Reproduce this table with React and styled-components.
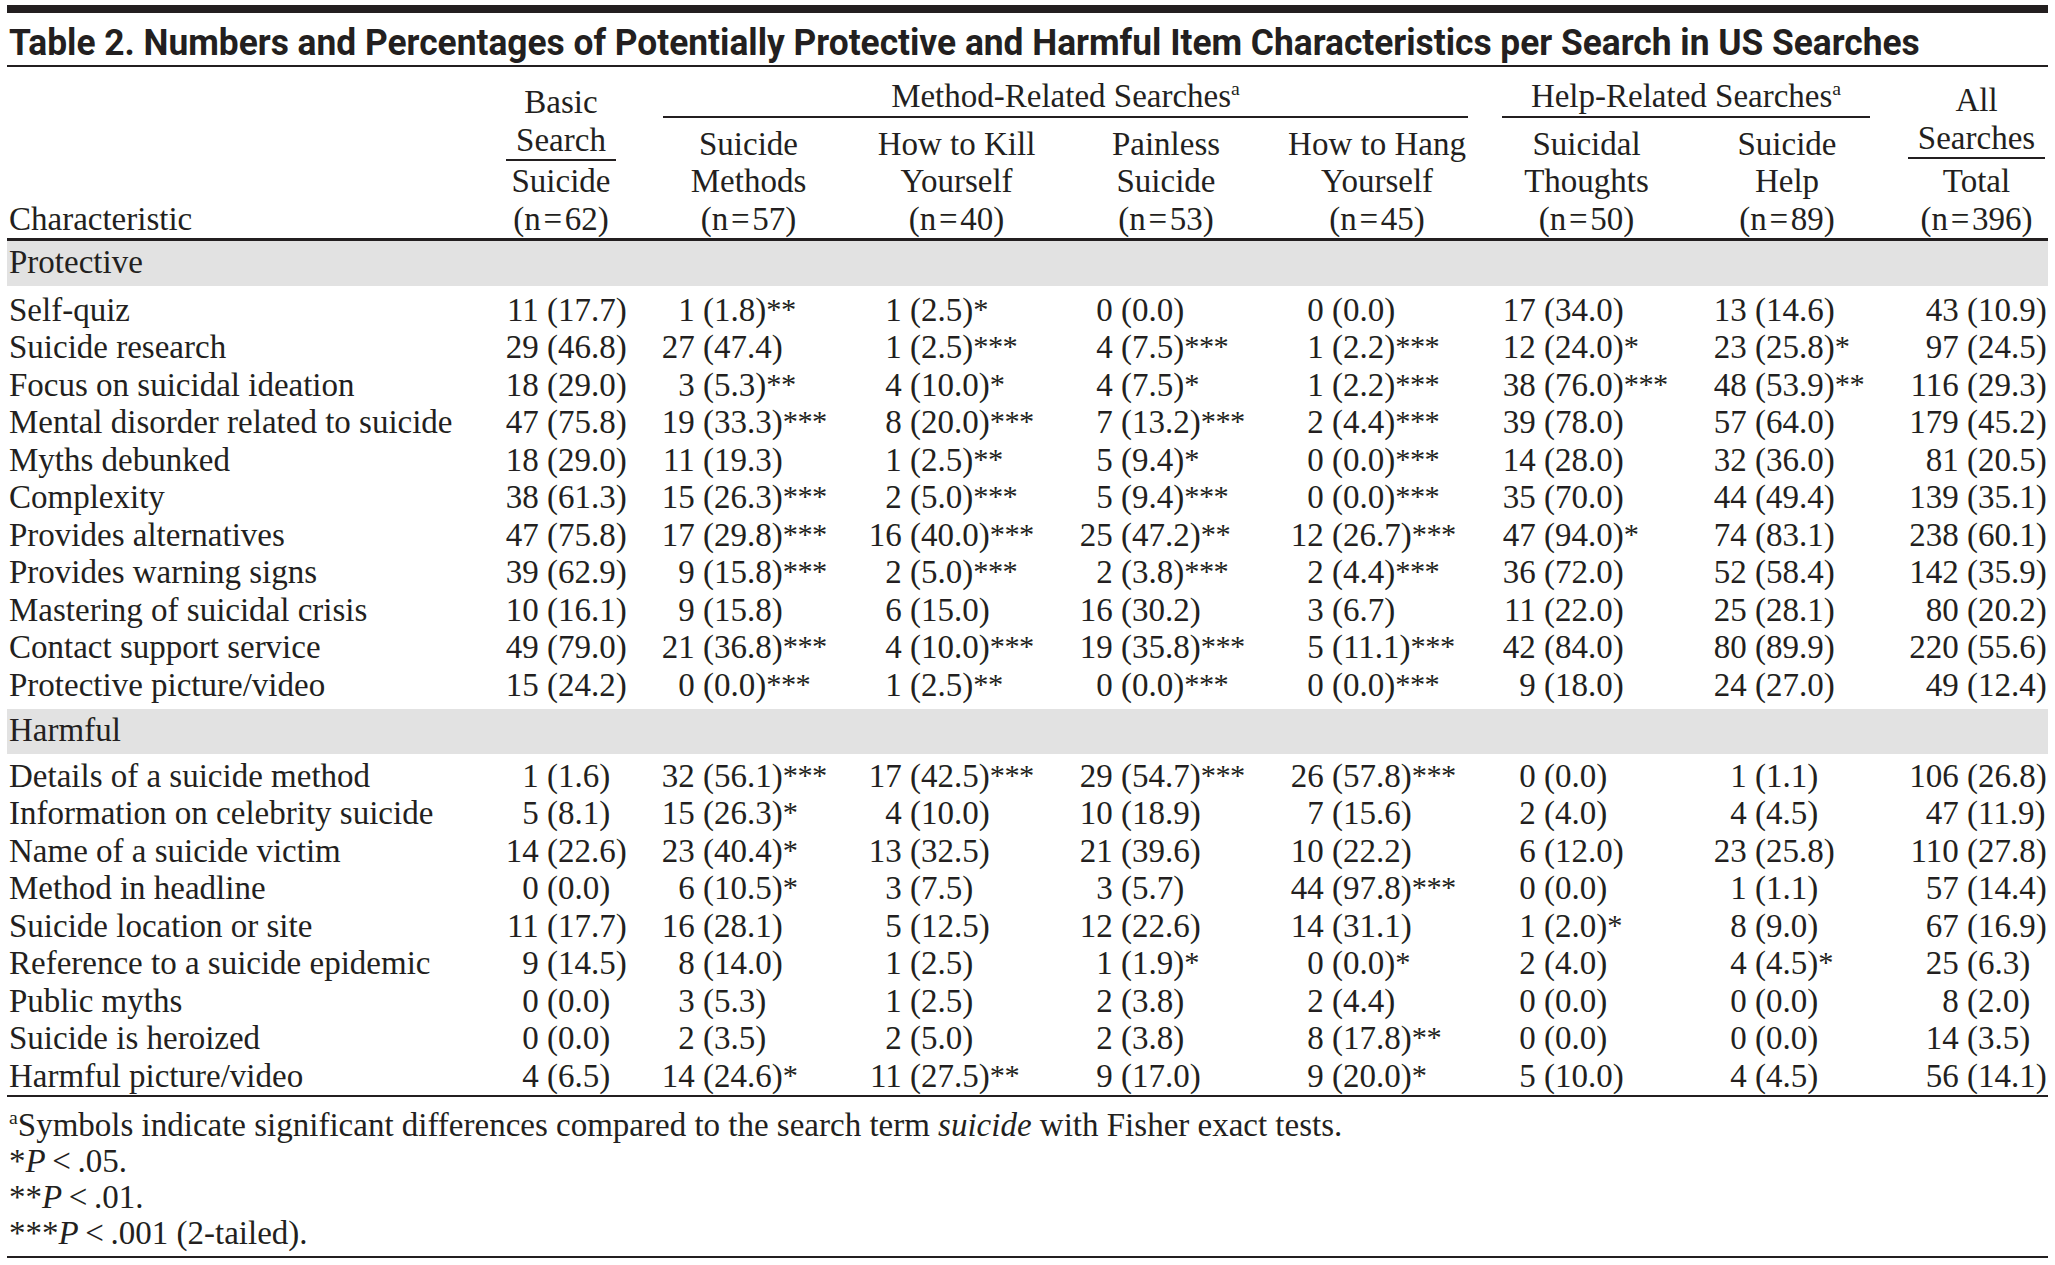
import React, { useLayoutEffect, useRef, useState } from "react";
import styled, { createGlobalStyle } from "styled-components";

const INK = "#231f20";
const COLS = "468px 182px 195px 209px 210px 212px 207px 194px 164px";
// x offset (from each data column's left edge) where the "(" of the percentage sits
const ANCHORS = [72, 46, 58, 60, 61, 61, 65, 83];
const EQ = "\u200A=\u200A";

const GlobalStyle = createGlobalStyle`
  html, body {
    margin: 0;
    padding: 0;
    background: #ffffff;
  }
  body {
    font-family: "Liberation Serif", "Times New Roman", serif;
    color: ${INK};
  }
`;

const Page = styled.div`
  width: 2041px;
  padding: 5px 7px 0;
`;

const TopBar = styled.div`
  height: 8px;
  background: ${INK};
`;

const TitleRow = styled.div`
  height: 54px;
  padding: 9px 0 0 2px;
  box-sizing: border-box;
  border-bottom: 2px solid ${INK};
  white-space: nowrap;
  overflow: hidden;
`;

const TitleText = styled.span`
  display: inline-block;
  transform-origin: left center;
  font-family: Roboto, "Open Sans", "Liberation Sans", sans-serif;
  font-weight: 700;
  font-size: 36px;
  line-height: 42px;
  color: ${INK};
`;

const Head = styled.div`
  display: grid;
  grid-template-columns: ${COLS};
  grid-template-rows: auto auto;
  border-bottom: 3px solid ${INK};
  font-size: 33px;
  line-height: 37.5px;
`;

const CharHead = styled.div`
  grid-column: 1;
  grid-row: 1 / span 2;
  align-self: end;
  padding-left: 2px;
`;

const StackHead = styled.div`
  grid-column: ${(p) => p.$col};
  grid-row: 1 / span 2;
  display: flex;
  flex-direction: column;
  align-items: center;
  justify-content: flex-end;
  text-align: center;
  padding-left: ${(p) => p.$pl || 0}px;
  padding-right: ${(p) => p.$pr || 0}px;
`;

const StackTop = styled.div`
  padding: 0 10px;
  border-bottom: 2px solid ${INK};
  line-height: 38px;
  margin-bottom: ${(p) => p.$gap}px;
`;

const GroupHead = styled.div`
  grid-row: 1;
  grid-column: ${(p) => p.$col};
  margin: 0 ${(p) => p.$mr}px 8px ${(p) => p.$ml}px;
  padding-top: 11px;
  border-bottom: 2px solid ${INK};
  text-align: center;
`;

const SubHead = styled.div`
  grid-row: 2;
  grid-column: ${(p) => p.$col};
  text-align: center;
  white-space: nowrap;
  padding-right: ${(p) => p.$pr || 0}px;
`;

const Sup = styled.sup`
  font-size: 0.6em;
  line-height: 0;
  vertical-align: 0.6em;
`;

const Body = styled.div`
  font-size: 33px;
  border-bottom: 2px solid ${INK};
`;

const Band = styled.div`
  height: 45px;
  line-height: 43px;
  padding-left: 2px;
  background: #e2e2e2;
`;

const Group = styled.div`
  padding: ${(p) => p.$pt}px 0 ${(p) => p.$pb}px;
`;

const Row = styled.div`
  display: grid;
  grid-template-columns: ${COLS};
  height: 37.5px;
  line-height: 37.5px;
  white-space: nowrap;
`;

const Label = styled.div`
  padding-left: 2px;
`;

const DataCell = styled.div`
  display: flex;
  white-space: nowrap;
`;

const Num = styled.span`
  display: inline-block;
  width: ${(p) => p.$w}px;
  box-sizing: border-box;
  padding-right: 0.25em;
  text-align: right;
`;

const Stars = styled.span`
  font-size: 0.92em;
  letter-spacing: -0.5px;
  position: relative;
  top: -1px;
`;

const Notes = styled.div`
  font-size: 33px;
  line-height: 36px;
  padding: 9.5px 0 5px 2px;
  border-bottom: 2px solid ${INK};
`;

const Note = styled.div`
  white-space: nowrap;
`;

const I = styled.i`
  font-style: italic;
`;

const SUBHEADS = [
  { col: 3, lines: ["Suicide", "Methods", `(n${EQ}57)`], pr: 12 },
  { col: 4, lines: ["How to Kill", "Yourself", `(n${EQ}40)`] },
  { col: 5, lines: ["Painless", "Suicide", `(n${EQ}53)`] },
  { col: 6, lines: ["How to Hang", "Yourself", `(n${EQ}45)`] },
  { col: 7, lines: ["Suicidal", "Thoughts", `(n${EQ}50)`] },
  { col: 8, lines: ["Suicide", "Help", `(n${EQ}89)`] },
];

const PROTECTIVE = [
  ["Self-quiz", "11 (17.7)", "1 (1.8)**", "1 (2.5)*", "0 (0.0)", "0 (0.0)", "17 (34.0)", "13 (14.6)", "43 (10.9)"],
  ["Suicide research", "29 (46.8)", "27 (47.4)", "1 (2.5)***", "4 (7.5)***", "1 (2.2)***", "12 (24.0)*", "23 (25.8)*", "97 (24.5)"],
  ["Focus on suicidal ideation", "18 (29.0)", "3 (5.3)**", "4 (10.0)*", "4 (7.5)*", "1 (2.2)***", "38 (76.0)***", "48 (53.9)**", "116 (29.3)"],
  ["Mental disorder related to suicide", "47 (75.8)", "19 (33.3)***", "8 (20.0)***", "7 (13.2)***", "2 (4.4)***", "39 (78.0)", "57 (64.0)", "179 (45.2)"],
  ["Myths debunked", "18 (29.0)", "11 (19.3)", "1 (2.5)**", "5 (9.4)*", "0 (0.0)***", "14 (28.0)", "32 (36.0)", "81 (20.5)"],
  ["Complexity", "38 (61.3)", "15 (26.3)***", "2 (5.0)***", "5 (9.4)***", "0 (0.0)***", "35 (70.0)", "44 (49.4)", "139 (35.1)"],
  ["Provides alternatives", "47 (75.8)", "17 (29.8)***", "16 (40.0)***", "25 (47.2)**", "12 (26.7)***", "47 (94.0)*", "74 (83.1)", "238 (60.1)"],
  ["Provides warning signs", "39 (62.9)", "9 (15.8)***", "2 (5.0)***", "2 (3.8)***", "2 (4.4)***", "36 (72.0)", "52 (58.4)", "142 (35.9)"],
  ["Mastering of suicidal crisis", "10 (16.1)", "9 (15.8)", "6 (15.0)", "16 (30.2)", "3 (6.7)", "11 (22.0)", "25 (28.1)", "80 (20.2)"],
  ["Contact support service", "49 (79.0)", "21 (36.8)***", "4 (10.0)***", "19 (35.8)***", "5 (11.1)***", "42 (84.0)", "80 (89.9)", "220 (55.6)"],
  ["Protective picture/video", "15 (24.2)", "0 (0.0)***", "1 (2.5)**", "0 (0.0)***", "0 (0.0)***", "9 (18.0)", "24 (27.0)", "49 (12.4)"],
];

const HARMFUL = [
  ["Details of a suicide method", "1 (1.6)", "32 (56.1)***", "17 (42.5)***", "29 (54.7)***", "26 (57.8)***", "0 (0.0)", "1 (1.1)", "106 (26.8)"],
  ["Information on celebrity suicide", "5 (8.1)", "15 (26.3)*", "4 (10.0)", "10 (18.9)", "7 (15.6)", "2 (4.0)", "4 (4.5)", "47 (11.9)"],
  ["Name of a suicide victim", "14 (22.6)", "23 (40.4)*", "13 (32.5)", "21 (39.6)", "10 (22.2)", "6 (12.0)", "23 (25.8)", "110 (27.8)"],
  ["Method in headline", "0 (0.0)", "6 (10.5)*", "3 (7.5)", "3 (5.7)", "44 (97.8)***", "0 (0.0)", "1 (1.1)", "57 (14.4)"],
  ["Suicide location or site", "11 (17.7)", "16 (28.1)", "5 (12.5)", "12 (22.6)", "14 (31.1)", "1 (2.0)*", "8 (9.0)", "67 (16.9)"],
  ["Reference to a suicide epidemic", "9 (14.5)", "8 (14.0)", "1 (2.5)", "1 (1.9)*", "0 (0.0)*", "2 (4.0)", "4 (4.5)*", "25 (6.3)"],
  ["Public myths", "0 (0.0)", "3 (5.3)", "1 (2.5)", "2 (3.8)", "2 (4.4)", "0 (0.0)", "0 (0.0)", "8 (2.0)"],
  ["Suicide is heroized", "0 (0.0)", "2 (3.5)", "2 (5.0)", "2 (3.8)", "8 (17.8)**", "0 (0.0)", "0 (0.0)", "14 (3.5)"],
  ["Harmful picture/video", "4 (6.5)", "14 (24.6)*", "11 (27.5)**", "9 (17.0)", "9 (20.0)*", "5 (10.0)", "4 (4.5)", "56 (14.1)"],
];

function Cell({ value, anchor }) {
  const m = value.match(/^(\d+) (\([^)]*\))(\**)$/);
  return (
    <DataCell>
      <Num $w={anchor}>{m[1]}</Num>
      <span>{m[2]}</span>
      {m[3] && <Stars>{m[3]}</Stars>}
    </DataCell>
  );
}

function DataRow({ row }) {
  const [label, ...vals] = row;
  return (
    <Row>
      <Label>{label}</Label>
      {vals.map((v, i) => (
        <Cell key={i} value={v} anchor={ANCHORS[i]} />
      ))}
    </Row>
  );
}

function useFitWidth(target) {
  const ref = useRef(null);
  const [scale, setScale] = useState(1);
  useLayoutEffect(() => {
    const fit = () => {
      if (ref.current) setScale(target / ref.current.offsetWidth);
    };
    fit();
    if (document.fonts && document.fonts.ready) document.fonts.ready.then(fit);
  }, [target]);
  return [ref, scale];
}

export default function App() {
  const [titleRef, titleScale] = useFitWidth(1911);

  return (
    <Page>
      <GlobalStyle />
      <TopBar />
      <TitleRow>
        <TitleText ref={titleRef} style={{ transform: `scaleX(${titleScale})` }}>
          Table 2. Numbers and Percentages of Potentially Protective and Harmful Item Characteristics per
          Search in US Searches
        </TitleText>
      </TitleRow>

      <Head>
        <CharHead>Characteristic</CharHead>
        <StackHead $col={2} $pr={10}>
          <StackTop $gap={2}>
            Basic
            <br />
            Search
          </StackTop>
          <div>
            Suicide
            <br />
            (n{EQ}62)
          </div>
        </StackHead>
        <GroupHead $col="3 / span 4" $ml={6} $mr={15}>
          Method-Related Searches<Sup>a</Sup>
        </GroupHead>
        <GroupHead $col="7 / span 2" $ml={19} $mr={14}>
          Help-Related Searches<Sup>a</Sup>
        </GroupHead>
        <StackHead $col={9} $pl={21}>
          <StackTop $gap={4}>
            All
            <br />
            Searches
          </StackTop>
          <div>
            Total
            <br />
            (n{EQ}396)
          </div>
        </StackHead>
        {SUBHEADS.map((s) => (
          <SubHead key={s.col} $col={s.col} $pr={s.pr}>
            {s.lines[0]}
            <br />
            {s.lines[1]}
            <br />
            {s.lines[2]}
          </SubHead>
        ))}
      </Head>

      <Body>
        <Band>Protective</Band>
        <Group $pt={5.5} $pb={4.5}>
          {PROTECTIVE.map((r) => (
            <DataRow key={r[0]} row={r} />
          ))}
        </Group>
        <Band>Harmful</Band>
        <Group $pt={4} $pb={0}>
          {HARMFUL.map((r) => (
            <DataRow key={r[0]} row={r} />
          ))}
        </Group>
      </Body>

      <Notes>
        <Note>
          <Sup>a</Sup>Symbols indicate significant differences compared to the search term <I>suicide</I> with
          Fisher exact tests.
        </Note>
        <Note>
          *<I>P</I>
          {"\u2009<\u2009.05."}
        </Note>
        <Note>
          **<I>P</I>
          {"\u2009<\u2009.01."}
        </Note>
        <Note>
          ***<I>P</I>
          {"\u2009<\u2009.001 (2-tailed)."}
        </Note>
      </Notes>
    </Page>
  );
}
